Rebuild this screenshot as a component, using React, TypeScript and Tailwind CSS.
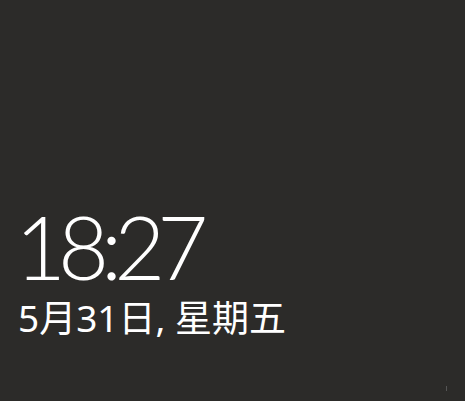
export default function App() {
  return (
    <div className="relative flex h-[401px] w-[465px] flex-col justify-end overflow-hidden bg-[#2c2b29] pb-[65px] pl-[18px] text-white">
      <div className="-ml-[3px] font-['Lato',_'Noto_Sans',_sans-serif] text-[88px] font-light leading-none tracking-[-8px]">
        18:27
      </div>
      <div className="mt-[9px] font-['Noto_Sans',_'Noto_Sans_CJK_SC',_sans-serif] text-[37px] leading-none">
        5月31日, 星期五
      </div>
      <div className="absolute bottom-[10px] right-[18px] h-[5px] w-px bg-[#555]" />
    </div>
  );
}
